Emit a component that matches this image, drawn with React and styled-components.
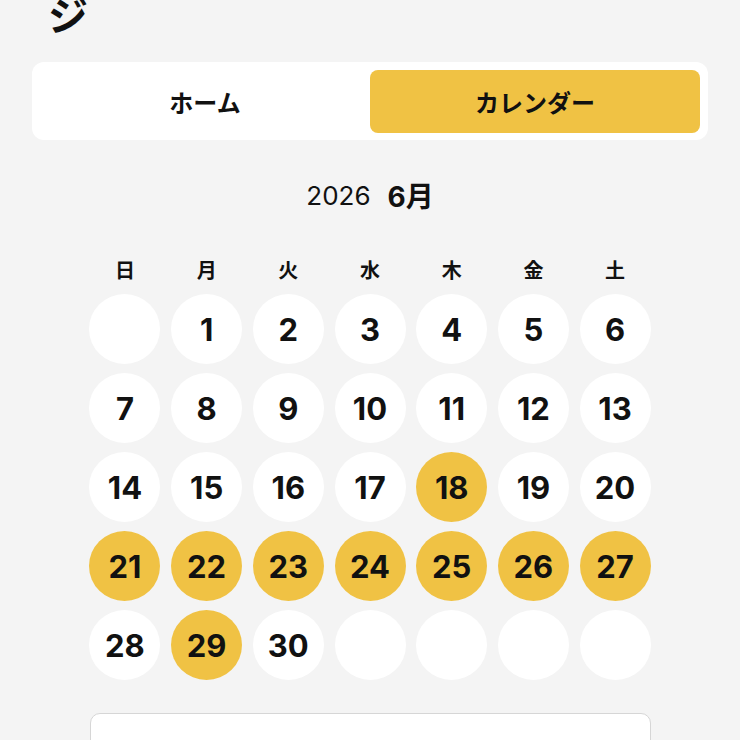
import styled, { createGlobalStyle } from 'styled-components';

const GlobalStyle = createGlobalStyle`
  body {
    margin: 0;
    background: #f4f4f4;
    font-family: Inter, "Noto Sans CJK JP", sans-serif;
    color: #111;
  }
`;

const WEEKDAYS = ['日', '月', '火', '水', '木', '金', '土'];
const MARKED = [18, 21, 22, 23, 24, 25, 26, 27, 29];

function buildCells(firstWeekday, days) {
  const cells = [];
  for (let i = 0; i < firstWeekday; i += 1) cells.push(null);
  for (let d = 1; d <= days; d += 1) cells.push(d);
  while (cells.length % 7) cells.push(null);
  return cells;
}

function App() {
  const cells = buildCells(1, 30);
  return (
    <Page>
      <GlobalStyle />
      <Title>ジ</Title>
      <Tabs>
        <Tab>ホーム</Tab>
        <Tab active>カレンダー</Tab>
      </Tabs>
      <MonthHeader>
        <Year>2026</Year>
        <Month>6月</Month>
      </MonthHeader>
      <Grid>
        {WEEKDAYS.map((w) => (
          <Weekday key={w}>{w}</Weekday>
        ))}
        {cells.map((d, i) => (
          <Day key={i} marked={d !== null && MARKED.includes(d)}>
            {d}
          </Day>
        ))}
      </Grid>
      <Card />
    </Page>
  );
}

export default App;

const Page = styled.div`
  padding: 0 32px;
  display: flex;
  flex-direction: column;
  height: 740px;
  overflow: hidden;
`;

const Title = styled.h1`
  margin: -6px 0 0 16px;
  font-family: "Noto Sans CJK JP", sans-serif;
  font-size: 40px;
  line-height: 40px;
  font-weight: 700;
`;

const Tabs = styled.div`
  margin-top: 28px;
  display: grid;
  grid-template-columns: 1fr 1fr;
  padding: 8px 8px 7px;
  background: #fff;
  border-radius: 12px;
`;

const Tab = styled.div`
  height: 63px;
  display: flex;
  align-items: center;
  justify-content: center;
  border-radius: 8px;
  font-family: "Noto Sans CJK JP", sans-serif;
  font-size: 24px;
  font-weight: 700;
  background: ${(props) => (props.active ? '#f0c244' : 'transparent')};
`;

const MonthHeader = styled.div`
  margin-top: 38px;
  height: 34px;
  display: flex;
  align-items: center;
  justify-content: center;
  gap: 17px;
`;

const Year = styled.span`
  font-size: 26px;
  font-weight: 400;
`;

const Month = styled.span`
  font-size: 28px;
  font-weight: 700;
`;

const Grid = styled.div`
  margin-top: 45px;
  align-self: center;
  display: grid;
  grid-template-columns: repeat(7, 71px);
  column-gap: 10.7px;
  row-gap: 9px;
`;

const Weekday = styled.div`
  height: 24px;
  padding-bottom: 4px;
  display: flex;
  align-items: center;
  justify-content: center;
  font-family: "Noto Sans CJK JP", sans-serif;
  font-size: 20px;
  font-weight: 700;
`;

const Day = styled.div`
  width: 71px;
  height: 70px;
  border-radius: 50%;
  display: flex;
  align-items: center;
  justify-content: center;
  font-size: 31px;
  font-weight: 700;
  background: ${(props) => (props.marked ? '#f0c244' : '#fff')};
`;

const Card = styled.div`
  margin-top: 33px;
  align-self: center;
  width: 561px;
  height: 80px;
  flex-shrink: 0;
  box-sizing: border-box;
  background: #fff;
  border: 1.5px solid #d6d6d6;
  border-radius: 10px;
`;
